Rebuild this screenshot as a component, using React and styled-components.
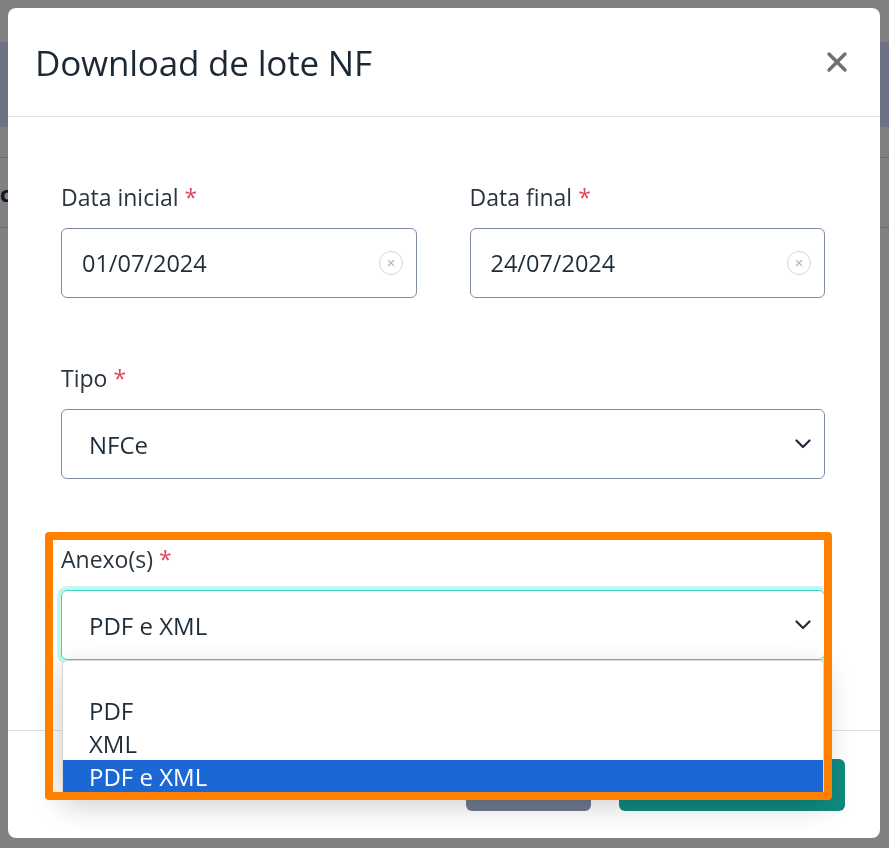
import React from "react"
import styled, { createGlobalStyle } from "styled-components"

const GlobalStyle = createGlobalStyle`
  html, body {
    margin: 0;
    padding: 0;
    background: #808080;
    font-family: "Open Sans", "Liberation Sans", sans-serif;
  }
  * { box-sizing: border-box; }
`

// page behind the backdrop, already dimmed
const Page = styled.div`
  height: 848px;
  padding-top: 42px;
`

const PageBar = styled.div`
  height: 85px;
  background: #6c7283;
`

const PageRow = styled.div`
  height: ${(p) => p.h}px;
  border-bottom: 1px solid #6a6a6a;
  display: flex;
  align-items: center;
  font-weight: 700;
  font-size: 22px;
  color: #10151f;
`

const Overlay = styled.div`
  position: fixed;
  inset: 0;
  padding: 8px 9px 10px 8px;
`

const Modal = styled.div`
  height: 830px;
  background: #fff;
  border-radius: 8px;
  display: flex;
  flex-direction: column;
  overflow: hidden;
`

const Header = styled.div`
  height: 109px;
  flex: none;
  border-bottom: 1px solid #dee2e6;
  display: flex;
  align-items: center;
  justify-content: space-between;
  padding: 0 32px 0 27px;
`

const Title = styled.h1`
  margin: 0;
  font-size: 35px;
  font-weight: 500;
  color: #1c2935;
  letter-spacing: -0.2px;
`

const CloseButton = styled.button`
  border: 0;
  background: none;
  padding: 0;
  width: 22px;
  height: 22px;
  display: flex;
  cursor: pointer;
`

const Body = styled.div`
  flex: 1;
  padding: 65px 55px 0 53px;
  position: relative;
`

const Grid = styled.div`
  display: grid;
  grid-template-columns: ${(p) => (p.cols === 2 ? "1fr 1fr" : "1fr")};
  column-gap: 53px;
  margin-bottom: 65px;
`

const Field = styled.div`
  display: flex;
  flex-direction: column;
  position: relative;
`

const Label = styled.label`
  font-size: 23px;
  line-height: 30px;
  color: #2a3540;
  margin-bottom: 16px;
`

const Star = styled.span`
  color: #e5435b;
  margin-left: 6px;
`

const Control = styled.div`
  height: 70px;
  border: 1px solid ${(p) => (p.focused ? "#36d6c4" : "#7e8ba4")};
  border-radius: 6px;
  box-shadow: ${(p) => (p.focused ? "0 0 0 4px #c9f5ef" : "none")};
  display: flex;
  align-items: center;
  justify-content: space-between;
  padding: 0 13px 0 ${(p) => (p.select ? 27 : 20)}px;
  font-size: ${(p) => (p.select ? 24 : 23.5)}px;
  color: #1f2d3a;
`

const ClearIcon = styled.span`
  width: 24px;
  height: 24px;
  border: 1px solid #d4d4d4;
  border-radius: 50%;
  display: flex;
  align-items: center;
  justify-content: center;
`

const Dropdown = styled.ul`
  position: absolute;
  top: 100%;
  left: 1px;
  right: 1px;
  margin: 0;
  padding: 33px 0 0;
  list-style: none;
  background: #fff;
  border: 1px solid #d9d9d9;
  border-radius: 5px 5px 0 0;
  box-shadow: 0 10px 30px rgba(0, 0, 0, 0.22);
  z-index: 2;
`

const Option = styled.li`
  height: 33px;
  line-height: 33px;
  padding-left: 26px;
  font-size: 24px;
  color: ${(p) => (p.selected ? "#fff" : "#1f2d3a")};
  background: ${(p) => (p.selected ? "#1b68d4" : "transparent")};
`

const Highlight = styled.div`
  position: absolute;
  left: -16px;
  right: -7px;
  top: -12px;
  height: 268px;
  border: 8px solid #ff8000;
  border-radius: 4px;
  pointer-events: none;
  z-index: 3;
`

const Footer = styled.div`
  height: 108px;
  flex: none;
  border-top: 1px solid #dee2e6;
  display: flex;
  justify-content: flex-end;
  align-items: flex-start;
  gap: 28px;
  padding: 28px 35px 0 0;
`

const Button = styled.button`
  height: 52px;
  width: ${(p) => p.w}px;
  border: 0;
  border-radius: 6px;
  background: ${(p) => p.bg};
  color: #fff;
  font-family: inherit;
  font-size: 20px;
`

const Chevron = () => (
  <svg width="16" height="10" viewBox="0 0 16 10">
    <path d="M1.5 1.5 8 8l6.5-6.5" fill="none" stroke="#1f2d3a" strokeWidth="2.2" strokeLinecap="round" strokeLinejoin="round" />
  </svg>
)

const Clear = () => (
  <ClearIcon>
    <svg width="10" height="10" viewBox="0 0 10 10">
      <path d="M2 2l6 6M8 2 2 8" stroke="#b5b5b5" strokeWidth="1.1" />
    </svg>
  </ClearIcon>
)

const options = ["PDF", "XML", "PDF e XML"]

export default function App() {
  return (
    <>
      <GlobalStyle />
      <Page>
        <PageBar />
        <PageRow h={31} />
        <PageRow h={70}>c</PageRow>
      </Page>
      <Overlay>
        <Modal>
          <Header>
            <Title>Download de lote NF</Title>
            <CloseButton aria-label="Fechar">
              <svg width="22" height="22" viewBox="0 0 22 22">
                <path d="M3 3l16 16M19 3 3 19" stroke="#6f6f6f" strokeWidth="3.4" strokeLinecap="round" />
              </svg>
            </CloseButton>
          </Header>
          <Body>
            <Grid cols={2}>
              <Field>
                <Label>Data inicial<Star>*</Star></Label>
                <Control>
                  01/07/2024
                  <Clear />
                </Control>
              </Field>
              <Field>
                <Label>Data final<Star>*</Star></Label>
                <Control>
                  24/07/2024
                  <Clear />
                </Control>
              </Field>
            </Grid>
            <Grid>
              <Field>
                <Label>Tipo<Star>*</Star></Label>
                <Control select>
                  NFCe
                  <Chevron />
                </Control>
              </Field>
            </Grid>
            <Grid>
              <Field>
                <Highlight />
                <Label>Anexo(s)<Star>*</Star></Label>
                <Control select focused>
                  PDF e XML
                  <Chevron />
                  <Dropdown>
                    {options.map((o) => (
                      <Option key={o} selected={o === "PDF e XML"}>{o}</Option>
                    ))}
                  </Dropdown>
                </Control>
              </Field>
            </Grid>
          </Body>
          <Footer>
            <Button w={125} bg="#6f7a8e">Fechar</Button>
            <Button w={226} bg="#0f8a80">Download</Button>
          </Footer>
        </Modal>
      </Overlay>
    </>
  )
}
